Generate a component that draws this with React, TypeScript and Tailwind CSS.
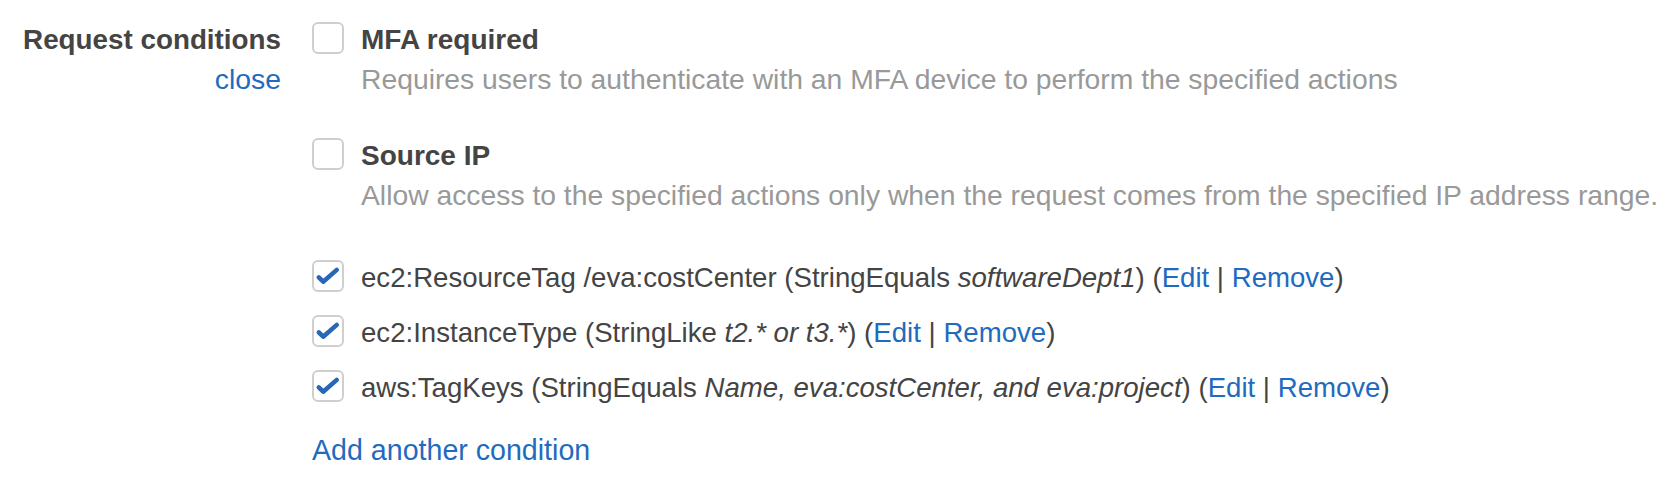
import React from "react";

function Box({ checked }: { checked?: boolean }) {
  return (
    <div className="w-[32px] h-[32px] shrink-0 rounded-[6px] border-2 border-[#cfcfcf] bg-white flex items-center justify-center">
      {checked && (
        <svg width="32" height="32" viewBox="0 0 32 32" className="block">
          <polyline
            points="5.5,17.5 10.5,22.5 26,9"
            fill="none"
            stroke="#2767b5"
            strokeWidth="5.2"
            strokeLinecap="round"
            strokeLinejoin="round"
          />
        </svg>
      )}
    </div>
  );
}

function Option({ label, desc }: { label: string; desc: string }) {
  return (
    <div className="flex items-start">
      <Box />
      <div className="ml-[17px]">
        <div className="font-bold leading-[36px] text-[28px] text-[#444444]">{label}</div>
        <div className="mt-[3px] leading-[36px] text-[28.3px] text-[#999999] whitespace-nowrap">{desc}</div>
      </div>
    </div>
  );
}

function Cond({ children }: { children: React.ReactNode }) {
  return (
    <div className="flex items-start">
      <Box checked />
      <div className="ml-[17px] leading-[36px] text-[27.6px] text-[#444444] whitespace-nowrap">
        {children}
        {" ("}
        <a className="text-[#1f6bbf] cursor-pointer">Edit</a>
        {" | "}
        <a className="text-[#1f6bbf] cursor-pointer">Remove</a>
        {")"}
      </div>
    </div>
  );
}

export default function App() {
  return (
    <div
      className="w-[1666px] h-[478px] bg-white flex items-start pt-[22px] overflow-hidden"
      style={{ fontFamily: '"Liberation Sans", Arial, Helvetica, sans-serif' }}
    >
      <div className="w-[281px] shrink-0 text-right">
        <div className="font-bold leading-[36px] text-[27.8px] text-[#444444] whitespace-nowrap">Request conditions</div>
        <div className="mt-[3px] leading-[36px] text-[28.4px]">
          <a className="text-[#1f6bbf] cursor-pointer">close</a>
        </div>
      </div>
      <div className="ml-[31px] flex flex-col">
        <Option
          label="MFA required"
          desc="Requires users to authenticate with an MFA device to perform the specified actions"
        />
        <div className="mt-[41px]">
          <Option
            label="Source IP"
            desc="Allow access to the specified actions only when the request comes from the specified IP address range."
          />
        </div>
        <div className="mt-[47px] flex flex-col gap-[19px]">
          <Cond>
            ec2:ResourceTag /eva:costCenter (StringEquals <i>softwareDept1</i>)
          </Cond>
          <Cond>
            ec2:InstanceType (StringLike <i>t2.* or t3.*</i>)
          </Cond>
          <Cond>
            aws:TagKeys (StringEquals <i>Name, eva:costCenter, and eva:project</i>)
          </Cond>
        </div>
        <div className="mt-[26px] leading-[36px] text-[28.6px]">
          <a className="text-[#1f6bbf] cursor-pointer">Add another condition</a>
        </div>
      </div>
    </div>
  );
}
